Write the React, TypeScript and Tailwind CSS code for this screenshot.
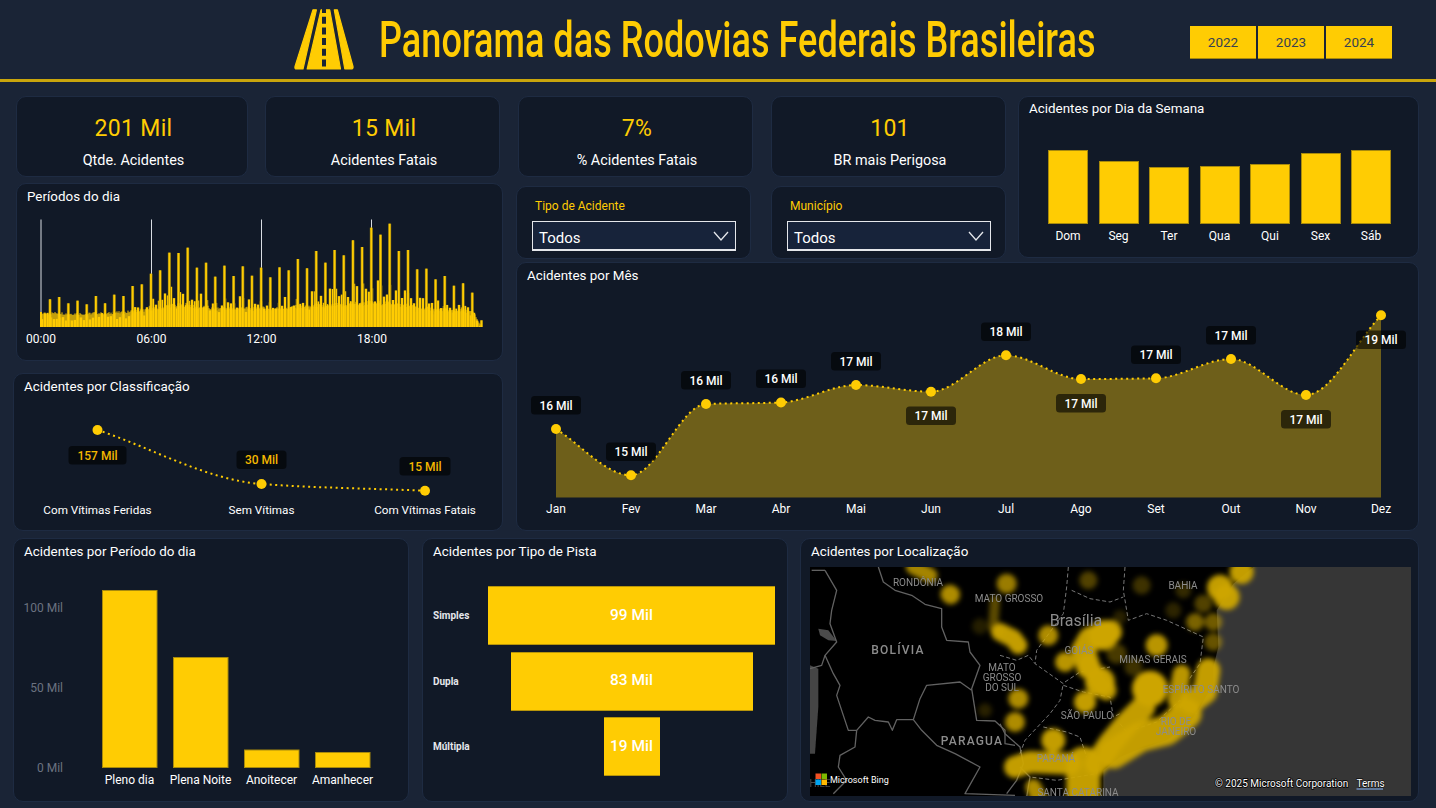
import React from "react";

const YEARS = ["2022", "2023", "2024"];

const WEEK = [
  { label: "Dom", h: 74 },
  { label: "Seg", h: 63 },
  { label: "Ter", h: 57 },
  { label: "Qua", h: 58 },
  { label: "Qui", h: 60 },
  { label: "Sex", h: 71 },
  { label: "Sáb", h: 74 },
];

const MONTHS = [
  { m: "Jan", x: 556, y: 429, v: "16 Mil", ly: 396 },
  { m: "Fev", x: 631, y: 475.3, v: "15 Mil", ly: 442.5 },
  { m: "Mar", x: 706, y: 404, v: "16 Mil", ly: 371 },
  { m: "Abr", x: 781, y: 402.5, v: "16 Mil", ly: 369.5 },
  { m: "Mai", x: 856, y: 385, v: "17 Mil", ly: 352 },
  { m: "Jun", x: 931, y: 391.7, v: "17 Mil", ly: 406.5 },
  { m: "Jul", x: 1006, y: 355.3, v: "18 Mil", ly: 322.5 },
  { m: "Ago", x: 1081, y: 379, v: "17 Mil", ly: 394 },
  { m: "Set", x: 1156, y: 378.3, v: "17 Mil", ly: 345.5 },
  { m: "Out", x: 1231, y: 359, v: "17 Mil", ly: 326 },
  { m: "Nov", x: 1306, y: 395, v: "17 Mil", ly: 410 },
  { m: "Dez", x: 1381, y: 315.3, v: "19 Mil", ly: 330.5 },
];

// tops of the half hour spikes, read from the chart
const SPIKES = [
  342, 335, 354, 346, 357, 332, 354, 328, 332, 302, 297, 265, 255, 202, 203, 187, 247, 232, 274, 241, 272, 243, 271,
  247, 276, 246, 255, 221, 249, 197, 232, 194, 210, 165, 185, 127, 148, 115, 197, 194, 252, 250, 282, 272, 301, 294,
  322, 405,
].map((t) => (425 - t) / 3);

const noise = (i: number) => {
  const s = Math.sin(i * 12.9898) * 43758.5453;
  return s - Math.floor(s);
};

const spikeAt = (x: number) => {
  const p = Math.max(0, Math.min(SPIKES.length - 1.001, (x - 50) / 9.18));
  const i = Math.floor(p);
  return SPIKES[i] + (SPIKES[i + 1] - SPIKES[i]) * (p - i);
};

function smoothPath(pts: { x: number; y: number }[]) {
  const sec = pts.slice(1).map((p, i) => (p.y - pts[i].y) / (p.x - pts[i].x));
  const m = pts.map((_, i) => {
    if (i === 0) return sec[0];
    if (i === pts.length - 1) return sec[i - 1];
    if (sec[i - 1] * sec[i] <= 0) return 0;
    return (2 * sec[i - 1] * sec[i]) / (sec[i - 1] + sec[i]);
  });
  let d = `M${pts[0].x} ${pts[0].y}`;
  for (let i = 0; i < pts.length - 1; i++) {
    const dx = (pts[i + 1].x - pts[i].x) / 3;
    d += ` C${pts[i].x + dx} ${pts[i].y + m[i] * dx} ${pts[i + 1].x - dx} ${pts[i + 1].y - m[i + 1] * dx} ${pts[i + 1].x} ${pts[i + 1].y}`;
  }
  return d;
}

// map points were read off two 3x crops, w* for the west one, e* for the east one
const wx = (x: number) => -5 + x / 3;
const ex = (x: number) => 190 + x / 3;
const west = (pts: number[][]) => pts.map((p, i) => `${i ? "L" : "M"}${wx(p[0])} ${p[1] / 3}`).join(" ");
const east = (pts: number[][]) => pts.map((p, i) => `${i ? "L" : "M"}${ex(p[0])} ${p[1] / 3}`).join(" ");

const COAST = [
  [760, 0], [700, 50], [650, 130], [655, 240], [640, 300], [640, 350], [600, 420], [560, 480], [500, 520], [420, 545],
  [360, 570], [310, 610], [310, 690],
];

const WEST_BORDERS = [
  [[60, 10], [95, 70], [80, 130], [75, 170], [95, 225], [60, 265], [85, 320], [105, 355], [95, 385], [130, 490], [155, 490], [190, 450], [210, 460], [250, 465], [262, 490], [275, 458], [325, 458], [350, 490], [395, 535], [450, 560], [525, 600], [480, 680], [630, 685]],
  [[220, 0], [235, 45], [270, 70], [320, 85], [360, 112], [410, 125], [410, 180], [425, 220], [490, 225], [495, 255], [525, 295], [500, 365], [515, 460], [570, 462], [600, 490], [600, 530], [630, 535]],
  [[500, 370], [465, 345], [365, 355], [345, 395], [325, 458]],
  [[155, 490], [150, 540], [105, 565], [100, 600], [125, 640], [85, 680]],
  [[15, 305], [50, 295], [60, 265]],
  [[20, 10], [60, 10]],
];

const EAST_BORDERS = [
  [[0, 470], [15, 500], [60, 540], [70, 590], [50, 640], [20, 680]],
  [[60, 600], [90, 630], [80, 690]],
];

const STATES = [
  [[205, 0], [200, 60], [190, 140], [110, 250], [105, 290], [190, 350], [180, 400], [150, 440], [75, 520], [60, 560]],
  [[375, 0], [370, 70], [385, 160], [440, 140], [500, 160], [610, 210], [600, 290], [565, 340]],
  [[215, 70], [270, 95], [330, 105], [370, 90]],
  [[0, 265], [50, 280], [85, 265], [105, 290]],
  [[195, 345], [240, 315], [330, 300]],
  [[190, 355], [250, 375], [330, 390], [340, 450], [360, 440]],
  [[130, 480], [200, 495], [240, 510], [260, 570]],
  [[360, 470], [380, 495], [470, 465], [540, 400], [540, 420], [590, 440]],
  [[300, 570], [290, 620], [230, 630], [170, 640], [90, 630]],
];

const BLOBS = [
  [660, 62, 13, 0.95], [680, 90, 13, 0.95], [725, 15, 12, 0.95], [470, 235, 11, 0.9], [255, 405, 11, 0.95],
  [195, 285, 10, 0.9], [145, 205, 10, 0.85], [55, 395, 10, 0.85], [45, 465, 10, 0.85], [160, 520, 12, 0.95],
  [20, 50, 10, 0.75], [450, 365, 18, 1], [300, 345, 15, 0.95], [310, 205, 15, 0.95],
  [265, 40, 9, 0.4], [425, 55, 9, 0.3], [520, 130, 8, 0.22], [585, 165, 9, 0.6], [640, 165, 9, 0.55], [640, 225, 9, 0.5],
  [610, 110, 9, 0.4], [550, 70, 8, 0.25], [360, 150, 7, 0.2], [350, 260, 10, 0.35], [400, 300, 9, 0.3],
  [-60, 178, 8, 0.18], [-45, 430, 7, 0.2],
];

const TRAILS: [number[][], number, number][] = [
  [[[330, 195], [270, 215], [250, 250], [265, 300]], 24, 0.95],
  [[[265, 290], [300, 350], [320, 370]], 20, 0.9],
  [[[625, 310], [615, 375], [575, 405]], 24, 0.95],
  [[[545, 320], [530, 400]], 18, 0.9],
  [[[430, 420], [380, 470], [330, 530], [290, 590]], 24, 0.95],
  [[[560, 440], [500, 490], [420, 510], [340, 560]], 30, 0.95],
  [[[250, 590], [250, 700]], 34, 0.95],
  [[[45, 600], [90, 585], [210, 590]], 22, 0.95],
  [[[100, 660], [120, 700]], 16, 0.85],
  [[[0, 195], [40, 215], [55, 235]], 18, 0.95],
  [[[-15, 100], [-20, 180], [0, 195]], 10, 0.45],
  [[[-260, 0], [-210, 25]], 15, 0.8],
  [[[-150, 82], [-148, 83]], 19, 0.85],
];

const MAP_LABELS: [string, number, number, string][] = [
  ["RONDÔNIA", 108, 15, "text-[10px]"],
  ["MATO GROSSO", 199, 31, "text-[10px]"],
  ["BAHIA", 373, 18, "text-[10px]"],
  ["Brasília", 266, 55, "text-[16px]"],
  ["BOLÍVIA", 88, 83.5, "text-[12px] font-medium tracking-[1.2px]"],
  ["GOIÁS", 269, 83, "text-[10px]"],
  ["MINAS GERAIS", 343, 92, "text-[10px]"],
  ["MATO", 192, 100, "text-[10px]"],
  ["GROSSO", 192, 110, "text-[10px]"],
  ["DO SUL", 192, 120, "text-[10px]"],
  ["ESPÍRITO SANTO", 391, 122, "text-[10px]"],
  ["SÃO PAULO", 277, 148, "text-[10px]"],
  ["RIO DE", 366, 154, "text-[10px]"],
  ["JANEIRO", 366, 164, "text-[10px]"],
  ["PARAGUA", 162, 174, "text-[12px] font-medium tracking-[1.2px]"],
  ["PARANÁ", 246, 191, "text-[10px]"],
  ["SANTA CATARINA", 268, 225, "text-[10px]"],
];

const Card = ({
  title,
  titleClass = "pb-[2px]",
  className,
  children,
}: {
  title?: string;
  titleClass?: string;
  className: string;
  children?: React.ReactNode;
}) => (
  <div className={`shrink-0 rounded-[10px] border border-[#1e2b42] bg-[#111927] ${className}`}>
    {title && <div className={`flex h-[28px] items-center pl-[10px] text-[13.4px] text-white ${titleClass}`}>{title}</div>}
    {children}
  </div>
);

const Kpi = ({ value, label, className }: { value: string; label: string; className: string }) => (
  <Card className={`flex h-[81px] flex-col items-center pl-[3px] ${className}`}>
    <div className="mt-[16px] h-[32px] text-[23px] leading-[32px] font-[450] tracking-[0.3px] text-[#ffcc03]">{value}</div>
    <div className="mt-[6px] text-[14.4px] leading-[20px] text-white">{label}</div>
  </Card>
);

const Filter = ({ label, className }: { label: string; className: string }) => (
  <Card className={`h-[73px] pt-[11px] ${className}`}>
    <div className="ml-[18px] h-[16px] text-[12px] leading-[16px] text-[#ffcc03]">{label}</div>
    <div className="mt-[7px] ml-[15px] flex h-[30px] w-[204px] items-center justify-between border border-b-2 border-[#e5e7eb] bg-[#17233a] pr-[6px] pl-[6px]">
      <span className="mt-[6px] text-[15px] text-white">Todos</span>
      <svg width="16" height="10" viewBox="0 0 16 10" fill="none" stroke="#e5e7eb" strokeWidth="1.3">
        <path d="M1 1 L8 9 L15 1" />
      </svg>
    </div>
  </Card>
);

const Pill = ({ x, y, w = 50, text, amber }: { x: number; y: number; w?: number; text: string; amber?: boolean }) => (
  <g>
    <rect x={x - w / 2} y={y} width={w} height={18.5} rx={3.5} fill="#000" fillOpacity={0.6} />
    <text
      x={x}
      y={y + 13.5}
      textAnchor="middle"
      className={`text-[12px] font-medium ${amber ? "fill-[#f5b800]" : "fill-white"}`}
    >
      {text}
    </text>
  </g>
);

const RoadLogo = () => (
  <svg width="60" height="61" viewBox="0 0 60 61" className="shrink-0">
    <g fill="#ffcc03" stroke="#ffcc03" strokeWidth="1.2" strokeLinejoin="round">
      <path d="M19 0.8 L22.4 0.8 L9 60 L2.5 60 Q0.5 60 1 57.5 Z" />
      <path d="M27 0.8 L35.7 0.8 L46.5 60 L13.2 60 Z" />
      <path d="M40.3 0.8 L43.4 0.8 L59 57.5 Q59.5 60 57 60 L50.8 60 Z" />
    </g>
    <path d="M30 0 V61" stroke="#1a2436" strokeWidth="4" strokeDasharray="7 3.7" strokeDashoffset="3" />
  </svg>
);

const PeriodChart = () => {
  const cols = Array.from({ length: 441 }, (_, i) => 41 + i);
  const fade = (x: number) => (x > 474 ? Math.max(0.1, (482 - x) / 8) : 1);
  return (
    <svg width="485" height="148" viewBox="17 212 485 148" className="block">
      {[41, 151.5, 261.5, 371.5].map((x) => (
        <line key={x} x1={x} x2={x} y1={219.5} y2={327} stroke="#d9dde3" strokeWidth="1" />
      ))}
      {cols
        .filter((x) => x % 3 === 0)
        .map((x) => (
          <line
            key={x}
            x1={x}
            x2={x}
            y1={327}
            y2={327 - spikeAt(x) * (0.25 + 0.3 * noise(x + 7)) * fade(x)}
            stroke="#ffcc03"
            strokeWidth="2.4"
          />
        ))}
      {SPIKES.map((h, i) => {
        const x = 50 + i * 9.18;
        return (
          <g key={i}>
            <line x1={x} x2={x} y1={327} y2={327 - h} stroke="#8f7a12" strokeWidth="3" />
            <line x1={x} x2={x} y1={327} y2={327 - h} stroke="#ffcc03" strokeWidth="1.8" />
          </g>
        );
      })}
      {cols.map((x) => {
        const solid = Math.min(24, 9 + spikeAt(x) * 0.17) * fade(x);
        return <line key={x} x1={x} x2={x} y1={327} y2={327 - solid * (0.9 + 0.2 * noise(x))} stroke="#ffcc03" />;
      })}
      <line x1={41} x2={41} y1={327} y2={312} stroke="#ffcc03" strokeWidth="2" />
      {[
        ["00:00", 41],
        ["06:00", 151.5],
        ["12:00", 261.5],
        ["18:00", 372],
      ].map(([t, x]) => (
        <text key={t} x={x} y={343} textAnchor="middle" className="fill-white text-[12px]">
          {t}
        </text>
      ))}
    </svg>
  );
};

const ClassChart = () => {
  const pts = [
    { x: 97.5, y: 430, label: "Com Vítimas Feridas", v: "157 Mil", ly: 446, w: 58 },
    { x: 261.5, y: 484, label: "Sem Vítimas", v: "30 Mil", ly: 450.5, w: 50 },
    { x: 425, y: 490.7, label: "Com Vítimas Fatais", v: "15 Mil", ly: 457, w: 51 },
  ];
  return (
    <svg width="488" height="128" viewBox="14 402 488 128" className="block">
      <path d={smoothPath(pts)} fill="none" stroke="#ffcc03" strokeWidth="2" strokeDasharray="2 3.5" />
      {pts.map((p) => (
        <g key={p.label}>
          <circle cx={p.x} cy={p.y} r={5} fill="#ffcc03" />
          <Pill x={p.x} y={p.ly} w={p.w} text={p.v} amber />
          <text x={p.x} y={514} textAnchor="middle" className="fill-white text-[11.7px]">
            {p.label}
          </text>
        </g>
      ))}
    </svg>
  );
};

const MonthChart = () => {
  const line = smoothPath(MONTHS);
  return (
    <svg width="901" height="239" viewBox="517 291 901 239" className="block">
      <path d={`${line} L1381 497.5 L556 497.5 Z`} fill="#6e5f1a" />
      <path d={line} fill="none" stroke="#ffcc03" strokeWidth="2" strokeDasharray="2 3.5" />
      {MONTHS.map((p) => (
        <g key={p.m}>
          <circle cx={p.x} cy={p.y} r={5} fill="#ffcc03" />
          <text x={p.x} y={513} textAnchor="middle" className="fill-white text-[12px]">
            {p.m}
          </text>
        </g>
      ))}
      {MONTHS.map((p) => (
        <Pill key={p.m} x={p.x} y={p.ly} text={p.v} />
      ))}
    </svg>
  );
};

const PeriodBars = () => {
  const bars = [
    { label: "Pleno dia", x: 102, y: 590.5 },
    { label: "Plena Noite", x: 173, y: 657.5 },
    { label: "Anoitecer", x: 244, y: 750 },
    { label: "Amanhecer", x: 315, y: 752.5 },
  ];
  return (
    <svg width="394" height="235" viewBox="14 567 394 235" className="block">
      {[
        ["100 Mil", 612],
        ["50 Mil", 692],
        ["0 Mil", 772],
      ].map(([t, y]) => (
        <text key={t} x={63} y={y} textAnchor="end" className="fill-[#6b7280] text-[12px]">
          {t}
        </text>
      ))}
      {bars.map((b) => (
        <g key={b.label}>
          <rect x={b.x + 0.5} y={b.y} width={54.5} height={767.5 - b.y} fill="#ffcc03" stroke="#a88a0c" strokeWidth="1" />
          <text x={b.x + 27.5} y={784} textAnchor="middle" className="fill-white text-[12px]">
            {b.label}
          </text>
        </g>
      ))}
    </svg>
  );
};

const MapView = () => (
  <svg width="601" height="229" viewBox="0 0 601 229" className="ml-[9px] block bg-[#363636]">
    <defs>
      <filter id="heat" x="-10%" y="-10%" width="120%" height="120%">
        <feGaussianBlur stdDeviation="2.6" />
      </filter>
      <filter id="soft">
        <feGaussianBlur stdDeviation="0.35" />
      </filter>
    </defs>
    <path d={`M0 0 ${east(COAST).replace("M", "L")} L0 232 Z`} fill="#000" />
    <g filter="url(#soft)">
      <path d={`${west([[15, 295], [40, 305], [40, 420], [30, 560], [15, 560]])} Z`} fill="#444" />
      <path d={`${west([[40, 185], [70, 190], [95, 222], [70, 220], [45, 205]])} Z`} fill="#4c4c4c" />
      <g fill="none" stroke="#626262" strokeWidth="1.3" strokeLinejoin="round">
        {WEST_BORDERS.map((b, i) => (
          <path key={i} d={west(b)} />
        ))}
        {EAST_BORDERS.map((b, i) => (
          <path key={i} d={east(b)} />
        ))}
      </g>
      <g fill="none" stroke="#787878" strokeWidth="1" strokeDasharray="4 2.5">
        {STATES.map((b, i) => (
          <path key={i} d={east(b)} />
        ))}
      </g>
    </g>
    <g filter="url(#heat)">
      {TRAILS.map(([pts, w, o], i) => (
        <path
          key={i}
          d={east(pts)}
          fill="none"
          stroke="#cda503"
          strokeOpacity={o}
          strokeWidth={w}
          strokeLinecap="round"
          strokeLinejoin="round"
        />
      ))}
      {BLOBS.map(([x, y, r, o], i) => (
        <circle key={i} cx={ex(x)} cy={y / 3} r={r} fill="#cda503" fillOpacity={o} />
      ))}
    </g>
    <g filter="url(#soft)">
      {MAP_LABELS.map(([t, x, y, c]) => (
        <text key={t} x={x} y={y + 3.5} textAnchor="middle" className={`fill-[#8c8c8c] ${c}`}>
          {t}
        </text>
      ))}
      <text x="10" y="219.5" textAnchor="middle" className="fill-[#4c4c4c] text-[10px]">
        HILE
      </text>
    </g>
    <rect x="5.5" y="206.5" width="5.5" height="5.5" fill="#f25022" />
    <rect x="11.5" y="206.5" width="5.5" height="5.5" fill="#7fba00" />
    <rect x="5.5" y="212.5" width="5.5" height="5.5" fill="#00a4ef" />
    <rect x="11.5" y="212.5" width="5.5" height="5.5" fill="#ffb900" />
    <text x="20" y="216" className="fill-white text-[9px]">
      Microsoft Bing
    </text>
    <text
      x="405"
      y="220"
      stroke="#000"
      strokeWidth="1.5"
      paintOrder="stroke"
      className="fill-white text-[10px]"
    >
      © 2025 Microsoft Corporation
    </text>
    <text x="546.5" y="220" stroke="#000" strokeWidth="1" paintOrder="stroke" className="fill-white text-[10px]">
      Terms
    </text>
    <line x1="546.5" x2="573" y1="222" y2="222" stroke="#7ea6e0" strokeWidth="1.2" />
  </svg>
);

const App = () => {
  return (
    <div className="h-[808px] w-[1436px] overflow-hidden bg-[#1a2436] font-['Roboto',sans-serif]">
      <header className="flex h-[82px] items-start border-b-[3px] border-[#c9a50c] pt-[9px] pl-[294px]">
        <RoadLogo />
        <div className="ml-[25px] w-[716px] whitespace-nowrap">
          <span className="inline-block origin-left scale-x-[0.722] text-[50px] leading-[62px] font-medium text-[#ffcc03]">
            Panorama das Rodovias Federais Brasileiras
          </span>
        </div>
        <div className="mt-[17px] ml-[95px] flex gap-[2px]">
          {YEARS.map((y) => (
            <div
              key={y}
              className="flex h-[33px] w-[66px] items-center justify-center border-b border-[#a88a0c] bg-[#ffcc03] text-[13.5px] text-[#374151]"
            >
              {y}
            </div>
          ))}
        </div>
      </header>

      <div className="flex pt-[14px]">
        <div className="w-[504px] shrink-0">
          <div className="flex gap-[17px] pl-[16px]">
            <Kpi value="201 Mil" label="Qtde. Acidentes" className="w-[232px]" />
            <Kpi value="15 Mil" label="Acidentes Fatais" className="w-[235px]" />
          </div>
          <Card title="Períodos do dia" className="mt-[6px] ml-[16px] h-[178px] w-[487px]">
            <PeriodChart />
          </Card>
          <Card title="Acidentes por Classificação" className="mt-[12px] ml-[13px] h-[158px] w-[490px]">
            <ClassChart />
          </Card>
        </div>

        <div className="ml-[12px] w-[903px] shrink-0">
          <div className="flex h-[162px]">
            <div className="w-[490px] shrink-0">
              <div className="flex gap-[18px] pl-[2px]">
                <Kpi value="7%" label="% Acidentes Fatais" className="w-[235px]" />
                <Kpi value="101" label="BR mais Perigosa" className="w-[235px]" />
              </div>
              <div className="mt-[9px] flex gap-[20px]">
                <Filter label="Tipo de Acidente" className="w-[235px]" />
                <Filter label="Município" className="w-[235px]" />
              </div>
            </div>
            <Card title="Acidentes por Dia da Semana" titleClass="pb-[4px]" className="ml-[12px] h-[162px] w-[401px]">
              <div className="flex h-[99px] items-end gap-[10.5px] pl-[29px]">
                {WEEK.map((d) => (
                  <div
                    key={d.label}
                    className="w-[40px] border border-[#a88a0c] bg-[#ffcc03]"
                    style={{ height: d.h }}
                  />
                ))}
              </div>
              <div className="mt-[3px] flex gap-[10.5px] pl-[29px]">
                {WEEK.map((d) => (
                  <div key={d.label} className="w-[40px] text-center text-[12px] leading-[18px] text-white">
                    {d.label}
                  </div>
                ))}
              </div>
            </Card>
          </div>
          <Card title="Acidentes por Mês" className="mt-[4px] h-[269px] w-[903px]">
            <MonthChart />
          </Card>
        </div>
      </div>

      <div className="mt-[7px] flex pl-[13px]">
        <Card title="Acidentes por Período do dia" className="h-[264px] w-[396px]">
          <PeriodBars />
        </Card>
        <Card title="Acidentes por Tipo de Pista" className="ml-[13px] h-[264px] w-[366px]">
          <div className="mt-[19px] flex flex-col gap-[6.5px] pl-[10px]">
            {[
              { label: "Simples", w: 287, v: "99 Mil" },
              { label: "Dupla", w: 242, v: "83 Mil" },
              { label: "Múltipla", w: 56, v: "19 Mil" },
            ].map((r) => (
              <div key={r.label} className="flex h-[59px] items-center">
                <div className="w-[55px] text-[10px] font-bold text-[#e5e7eb]">{r.label}</div>
                <div className="flex w-[287px] justify-center">
                  <div
                    className="flex h-[59px] items-center justify-center border-t border-b border-[#b8950a] bg-[#ffcc03] text-[15.5px] font-medium whitespace-nowrap text-white"
                    style={{ width: r.w }}
                  >
                    {r.v}
                  </div>
                </div>
              </div>
            ))}
          </div>
        </Card>
        <Card title="Acidentes por Localização" className="ml-[12px] h-[264px] w-[619px]">
          <MapView />
        </Card>
      </div>
    </div>
  );
};

export default App;
